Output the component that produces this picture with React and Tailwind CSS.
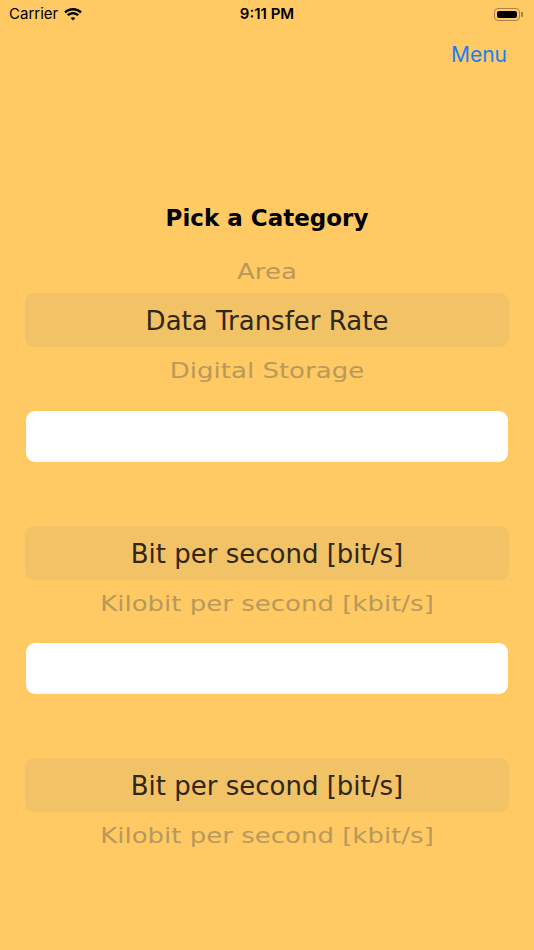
import React from "react";

function Wifi() {
  return (
    <svg width="18" height="13" viewBox="0 0 18 13" className="ml-[6px]">
      <path d="M9 2.6c2.7 0 5.2 1 7.1 2.8l1.7-1.8C15.5 1.4 12.4 0 9 0S2.5 1.4 0.2 3.6l1.7 1.8C3.8 3.6 6.3 2.6 9 2.6z" fill="#000" />
      <path d="M9 6.4c1.7 0 3.2 0.6 4.4 1.7l1.7-1.8C13.5 4.8 11.3 3.9 9 3.9S4.5 4.8 2.9 6.3l1.7 1.8C5.8 7 7.3 6.4 9 6.4z" fill="#000" />
      <path d="M9 9.2c0.9 0 1.7 0.3 2.3 0.9L9 12.6 6.7 10.1C7.3 9.5 8.1 9.2 9 9.2z" fill="#000" />
    </svg>
  );
}

function Battery() {
  return (
    <div className="flex items-center">
      <div className="w-[26px] h-[13px] rounded-[4px] border border-[#a48446] p-[2px]">
        <div className="w-full h-full rounded-[2px] bg-black" />
      </div>
      <div className="w-[2px] h-[5px] rounded-r-[1px] bg-[#a48446] ml-[1px]" />
    </div>
  );
}

function Picker({ above, selected, below }) {
  return (
    <div className="relative h-[150px] px-[25px]" style={{ fontFamily: '"DejaVu Sans", Verdana, sans-serif' }}>
      <div className="absolute left-[25px] right-[25px] top-[48px] h-[54px] rounded-[9px] bg-[#f2c266]" />
      <div className="relative flex flex-col">
        <div className="h-[50px] pt-[5px] flex items-center justify-center text-[26px] text-[#b8995a] scale-y-[0.82] whitespace-nowrap">
          {above}
        </div>
        <div className="h-[50px] pt-[3px] flex items-center justify-center text-[26px] text-[#2f2718] whitespace-nowrap">
          {selected}
        </div>
        <div className="h-[50px] pt-[2px] flex items-center justify-center text-[26px] text-[#b8995a] scale-y-[0.82] whitespace-nowrap">
          {below}
        </div>
      </div>
    </div>
  );
}

function Field() {
  return <div className="mx-[26px] h-[51px] rounded-[9px] bg-white" />;
}

export default function App() {
  return (
    <div className="w-[534px] h-[950px] bg-[#ffca64] flex flex-col overflow-hidden">
      <div className="h-[28px] flex items-center justify-between px-[9px] relative" style={{ fontFamily: 'Inter, "Liberation Sans", sans-serif' }}>
        <div className="flex items-center text-[15px] text-black">
          <span>Carrier</span>
          <Wifi />
        </div>
        <div className="absolute left-0 right-0 text-center text-[15px] font-semibold text-black">9:11 PM</div>
        <div className="pr-[2px]">
          <Battery />
        </div>
      </div>
      <div className="h-[54px] flex items-center justify-end pr-[27px]">
        <span className="text-[21px] text-[#1a7ff5]" style={{ fontFamily: 'Inter, "Liberation Sans", sans-serif' }}>Menu</span>
      </div>
      <div className="mt-[123px] h-[26px] flex items-center justify-center text-[23px] font-bold text-black" style={{ fontFamily: '"DejaVu Sans", Verdana, sans-serif' }}>
        Pick a Category
      </div>
      <div className="mt-[14px]">
        <Picker above="Area" selected="Data Transfer Rate" below="Digital Storage" />
      </div>
      <div className="mt-[16px]">
        <Field />
      </div>
      <div className="mt-[16px]">
        <Picker above="" selected="Bit per second [bit/s]" below="Kilobit per second [kbit/s]" />
      </div>
      <div className="mt-[15px]">
        <Field />
      </div>
      <div className="mt-[16px]">
        <Picker above="" selected="Bit per second [bit/s]" below="Kilobit per second [kbit/s]" />
      </div>
    </div>
  );
}
